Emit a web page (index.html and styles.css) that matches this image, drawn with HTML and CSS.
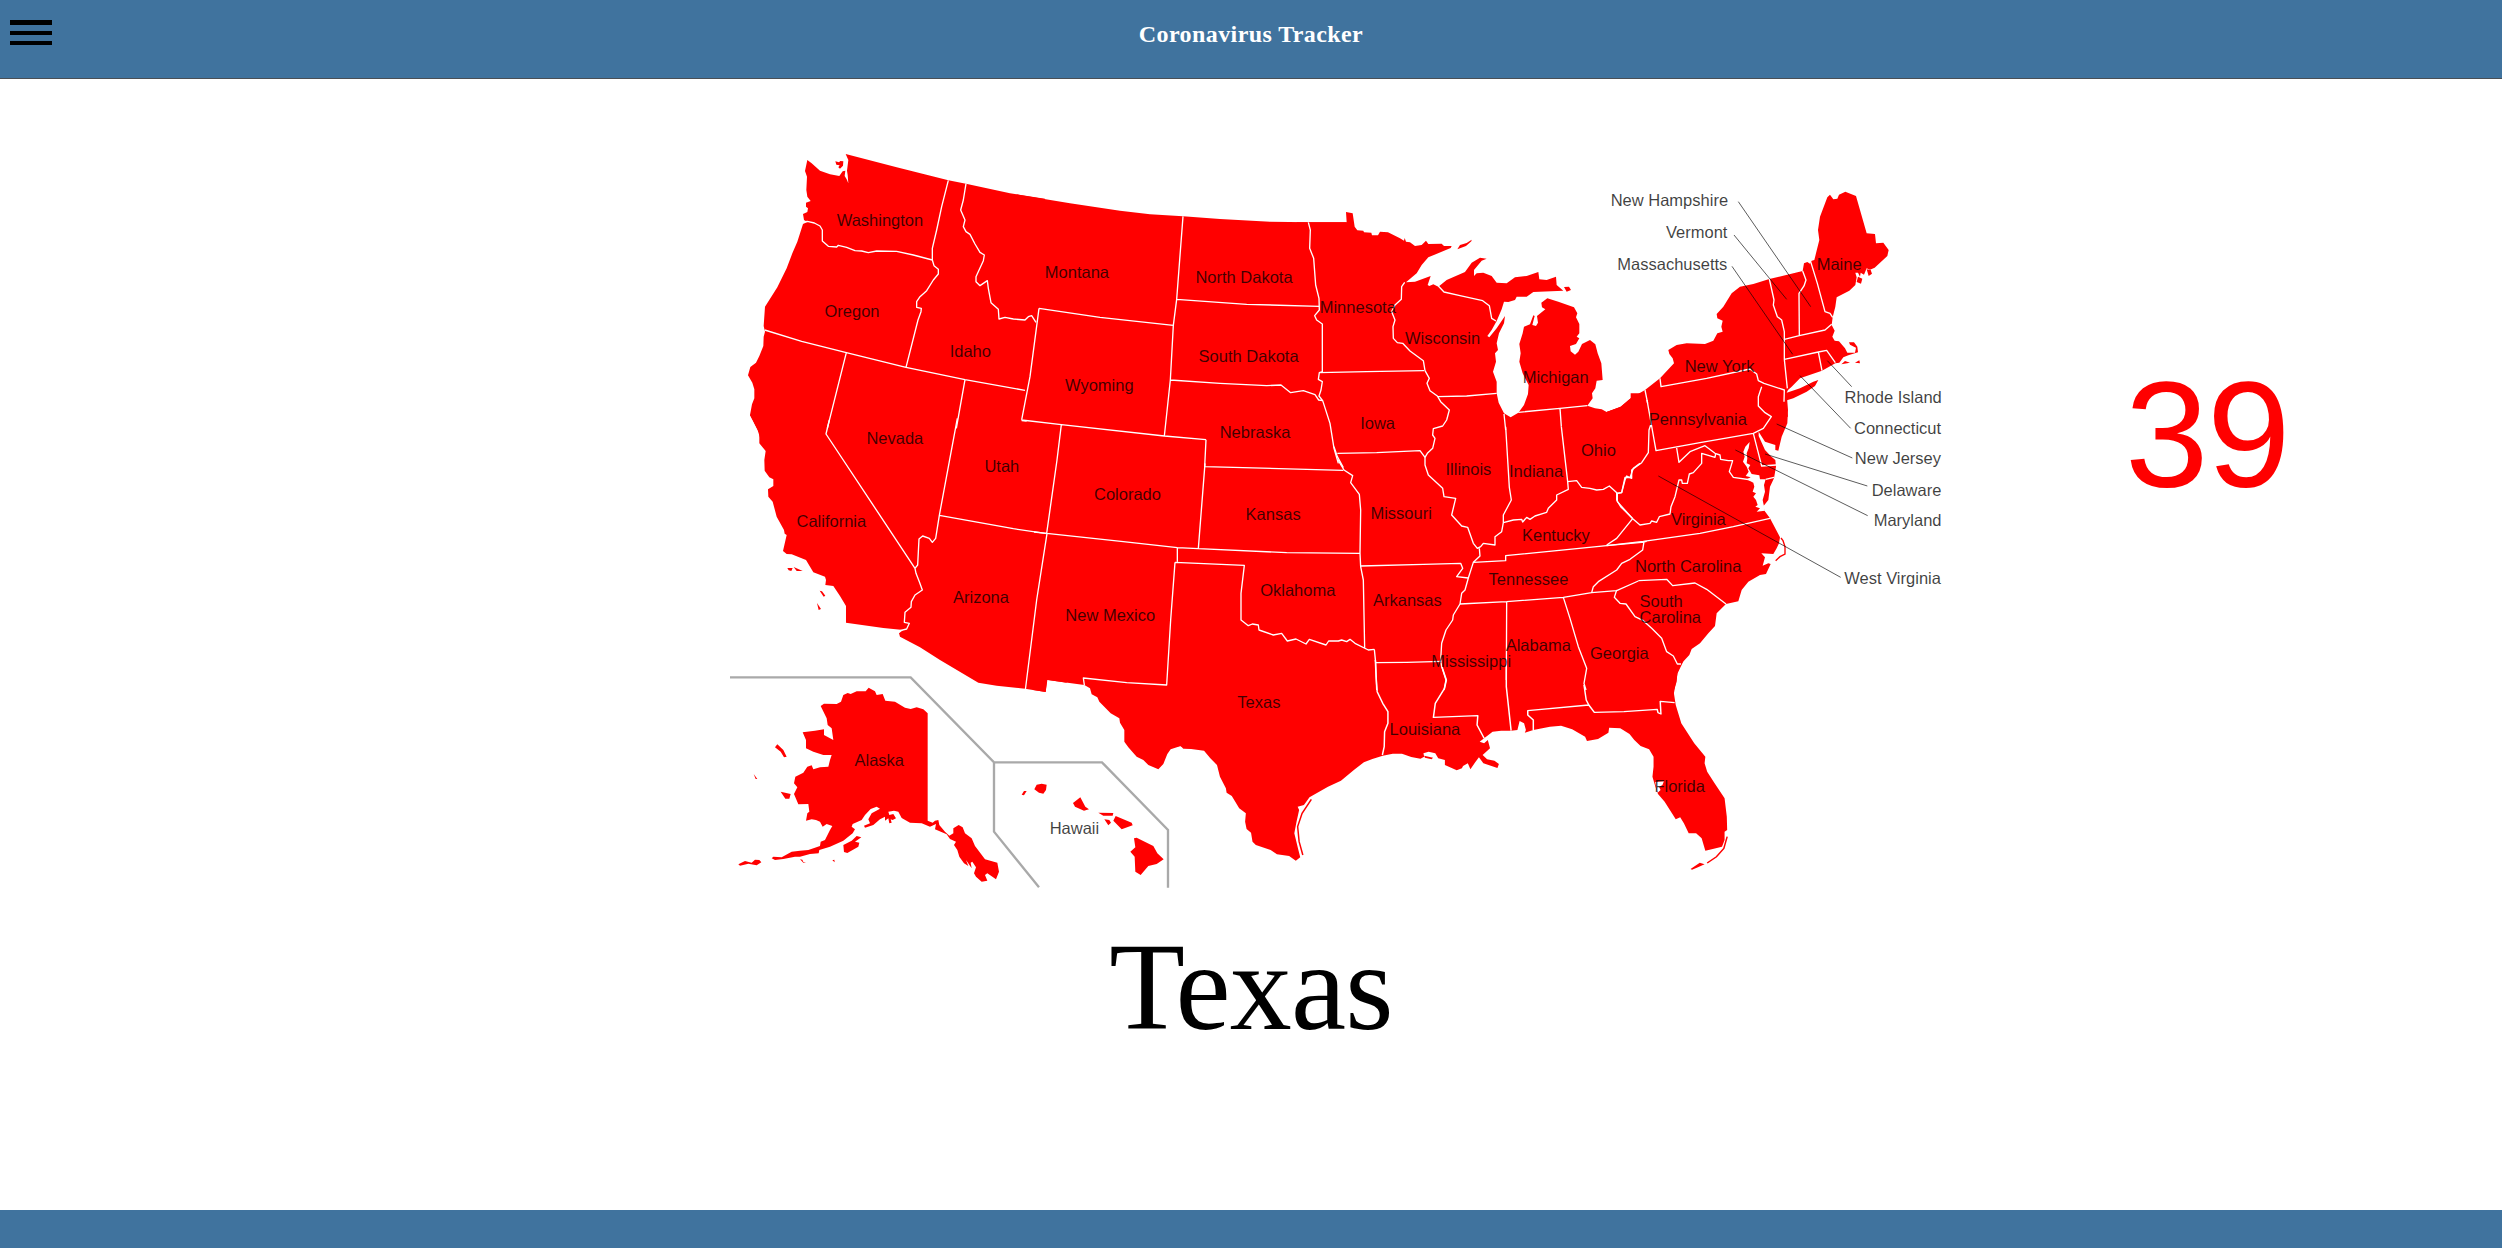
FILE: index.html
```html
<!DOCTYPE html>
<html lang="en">
<head>
<meta charset="utf-8">
<title>Coronavirus Tracker</title>
<link rel="stylesheet" href="styles.css">
</head>
<body>
<header class="header">
  <button class="menu" aria-label="Menu">
    <span class="bar bar-top"></span>
    <span class="bar"></span>
    <span class="bar"></span>
  </button>
  <h1 class="title">Coronavirus Tracker</h1>
  <span class="header-end"></span>
</header>
<main class="main">
  <section class="tracker">
    <svg class="map" viewBox="720 140 1240 760" role="img" aria-label="Map of the United States">
      <g class="land">
        <!-- Northwest -->
        <g transform="translate(720 140) scale(.33333)">
          <path d="M122,900 113,870 90,825 96,793 103,775 103,748 97,728 84,706 91,681 108,668 118,648 130,618 131,590 135,575 131,558 135,500 172,442 200,385 217,340 232,305 249,252 262,246 252,240 249,222 262,216 264,205 258,200 258,188 272,183 262,170 259,150 261,110 255,93 262,60 275,70 300,92 330,103 358,108 368,94 376,92 374,108 380,118 385,130 383,105 381,92 385,60 377,42 530,82 685,121 738,131 870,160 960,174 975,176 975,900Z"/>
          <path d="M346,64 357,67 361,63 370,64 369,77 360,86 355,82 359,76 349,74Z"/>
        </g>
        <!-- Northern plains -->
        <g transform="translate(1020 190) scale(.33333)">
          <path d="M-10,13 0,15 150,40 300,62 390,73 489,79 600,87 750,95 865,97 980,97 980,900 -10,900Z"/>
        </g>
        <!-- Great Lakes -->
        <g transform="translate(1300 190) scale(.33333)">
          <path d="M-10,97 140,97 138,66 158,70 164,110 172,121 190,122 192,127 214,128 216,136 234,136 240,125 264,127 300,145 312,152 314,144 318,155 330,157 345,168 365,165 378,152 385,162 425,161 432,168 455,168 452,174 385,202 365,225 350,250 318,277 345,275 392,258 383,285 388,288 400,283 415,290 440,270 495,246 515,218 540,203 560,206 545,212 522,240 522,258 530,250 550,248 575,258 590,278 620,280 645,262 680,258 715,246 718,268 740,270 768,260 770,285 790,302 700,306 680,320 650,320 645,330 625,336 612,335 605,358 590,393 575,420 562,438 568,442 590,415 615,378 612,400 597,430 590,460 594,480 585,490 588,515 579,545 590,575 590,610 596,638 612,670 632,682 655,668 672,645 684,612 686,585 668,550 658,515 662,490 658,462 668,430 672,410 690,403 700,376 704,378 697,405 708,408 714,398 711,378 736,358 726,352 724,338 742,325 775,335 822,352 832,370 828,382 838,402 838,430 830,440 838,445 828,462 810,468 812,484 825,494 835,485 846,462 870,450 886,463 893,490 904,520 908,570 890,572 886,595 876,610 878,625 862,647 885,655 905,658 920,666 955,655 980,650 980,880 -10,900Z"/>
          <path d="M472,178 480,165 500,159 515,149 514,154 498,168ZM792,291 807,290 813,300 800,305Z"/>
        </g>
        <!-- Northeast -->
        <g transform="translate(1600 170) scale(.33333)">
          <path d="M-10,740 -10,718 0,722 18,727 62,710 92,685 135,660 180,625 222,580 218,565 208,552 205,540 230,525 260,520 315,522 340,512 352,490 368,485 364,470 368,452 352,445 350,432 370,410 395,370 420,350 460,342 508,327 608,303 612,280 622,276 630,281 635,272 643,270 648,250 658,210 654,180 660,140 682,82 690,74 700,88 712,86 717,74 736,65 768,78 800,190 825,192 828,220 850,218 866,240 862,258 824,293 810,299 800,295 792,314 782,308 780,320 774,308 766,308 770,322 766,345 748,362 710,382 706,410 698,442 695,465 704,482 697,500 704,512 717,514 735,535 742,548 765,548 768,533 750,524 747,517 762,517 772,530 774,547 745,556 730,562 718,578 706,580 666,602 600,625 575,650 564,660 560,668 600,655 640,635 655,630 645,648 620,665 580,685 556,692 554,702 542,708 558,706 564,740Z"/>
          <path d="M724,583 735,573 750,578ZM765,578 778,571 780,580ZM774,320 787,326 783,341 770,336ZM800,298 812,300 816,311 806,318Z"/>
        </g>
        <!-- Southwest -->
        <g transform="translate(720 420) scale(.33333)">
          <path d="M90,-15 98,0 118,40 118,70 137,93 133,120 134,152 148,172 160,178 160,198 144,208 145,230 158,245 170,290 192,330 194,341 200,345 189,393 200,402 215,403 258,420 280,457 315,470 318,480 316,495 340,498 360,528 378,558 378,608 490,624 550,630 537,640 540,650 600,682 660,720 775,788 830,797 915,806 977,816 981,779 1020,785 1040,788 1040,-20Z"/>
          <path d="M202,444 218,444 214,453 206,451ZM221,441 248,453 230,453ZM299,512 306,514 316,527 311,530ZM291,549 303,567 296,570Z"/>
        </g>
        <!-- Southern plains -->
        <g transform="translate(1040 460) scale(.33333)">
          <path d="M-20,-20 1040,-20 1040,868 430,866 422,858 392,868 382,882 370,912 355,928 325,915 310,900 290,890 265,862 253,845 253,810 240,788 238,775 212,760 178,725 172,712 155,703 150,685 133,675 22,660 17,696 -20,690Z"/>
        </g>
        <!-- Mississippi and Ohio valleys -->
        <g transform="translate(1340 400) scale(.33333)">
          <path d="M-10,85 980,85 980,900 -10,900Z"/>
        </g>
        <!-- Mid-Atlantic -->
        <g transform="translate(1600 400) scale(.33333)">
          <path d="M-10,28 0,32 18,37 62,20 92,-5 92,-20 560,-20 564,30 562,70 545,110 535,152 526,150 526,135 495,125 482,105 476,95 476,108 495,150 512,168 526,180 528,200 522,235 510,260 505,300 493,315 490,318 494,333 510,355 540,412 537,430 530,445 520,462 484,460 495,472 488,497 505,490 512,492 498,522 480,525 445,545 425,570 415,604 378,612 350,640 345,678 325,700 300,730 275,747 268,765 243,792 232,820 230,845 222,870 222,900 -10,900Z"/>
          <path class="water" d="M449,126 436,140 430,155 434,170 429,185 440,200 446,215 437,228 452,232 440,238 460,248 463,260 458,275 468,280 460,290 468,300 473,315 466,320 480,325 470,335 495,332 490,310 488,300 495,275 492,255 497,238 480,238 478,226 455,222 445,205 451,195 440,190 442,175 440,160 446,145Z"/>
          <path class="spit" d="M543,414 549,422 555,440 555,462 540,470 527,482"/>
        </g>
        <!-- Gulf coast -->
        <g transform="translate(1180 660) scale(.36996 .33333)">
          <path d="M-20,262 0,258 15,265 65,272 82,295 100,315 108,350 124,385 126,398 140,408 160,445 178,460 176,485 180,507 192,518 196,545 205,555 245,570 262,583 295,588 313,602 325,592 320,570 309,520 315,485 322,450 318,440 335,435 350,412 400,380 435,362 470,330 497,307 520,297 548,287 575,281 600,281 625,291 650,296 660,290 658,280 672,275 690,280 698,295 716,300 716,315 748,331 762,325 765,318 778,310 785,328 797,308 808,292 820,310 858,324 862,312 850,302 830,298 818,285 838,265 832,240 822,250 810,245 822,235 845,215 868,212 895,212 912,210 918,183 930,190 935,210 932,218 955,210 1000,200 1030,197 1060,208 1095,230 1100,243 1130,237 1158,218 1160,203 1190,205 1215,222 1228,240 1245,258 1268,268 1280,290 1280,320 1277,350 1285,380 1292,402 1310,425 1340,478 1352,472 1362,490 1375,520 1395,520 1410,535 1420,572 1440,567 1465,560 1472,540 1472,515 1479,510 1478,470 1472,415 1445,370 1425,335 1418,310 1420,290 1390,250 1355,190 1340,135 1335,100 1345,40 1360,5 1362,-10 -20,-10Z"/>
          <path class="spit" d="M355,418 330,460 318,500 322,545 332,585M1479,530 1470,565 1450,590 1425,609"/>
          <path d="M1380,627 1392,618 1405,608 1418,613 1400,622 1384,629ZM660,287 684,293 680,298 662,293Z"/>
          <path class="water" d="M1284,366 1308,364 1304,375 1295,381 1299,390 1291,398Z"/>
        </g>
        <!-- Alaska and Hawaii -->
        <g transform="translate(720 660) scale(.33333)">
          <path d="M302,138 312,131 350,132 363,125 370,105 383,99 392,102 410,94 437,94 446,83 465,94 470,105 488,102 496,122 525,125 555,143 572,147 590,142 610,148 623,160 623,482 638,488 645,482 655,480 658,495 675,515 688,527 700,520 700,505 716,495 728,502 735,520 755,535 765,558 795,598 832,608 837,635 828,658 802,640 795,645 802,662 785,665 768,650 762,640 768,622 757,605 752,608 755,625 738,600 745,618 732,610 718,590 712,570 702,555 708,545 690,537 680,523 645,508 648,492 630,500 605,490 570,488 545,474 535,455 522,452 505,455 508,465 520,462 528,475 518,480 512,478 515,488 508,490 505,475 495,482 495,470 480,478 460,495 435,503 432,497 450,490 445,478 455,460 480,446 470,440 452,447 435,465 425,480 398,492 395,500 405,508 398,520 370,542 330,560 298,570 296,580 270,582 240,590 225,590 190,597 165,600 155,595 160,590 185,592 215,575 240,572 265,570 300,558 302,545 315,540 330,510 337,498 320,492 308,500 300,485 288,480 275,478 258,482 262,460 268,455 265,432 235,433 222,402 232,382 222,370 226,350 250,338 262,320 275,316 280,328 300,322 325,320 330,300 335,285 310,285 280,275 258,265 258,240 248,217 285,212 312,208 312,225 340,240 335,205 323,195 320,175Z"/>
          <path d="M165,262 172,253 190,270 200,290 192,292 182,275ZM101,342 112,357 107,357ZM182,395 212,402 208,416 196,416ZM370,555 395,542 410,528 424,532 405,545 418,548 415,560 382,579 372,576ZM55,613 75,603 95,608 105,599 118,600 124,607 110,616 85,611 60,617ZM337,601 343,599 344,607ZM240,598 247,599 250,606 258,606 250,608ZM905,404 912,393 920,393 912,406ZM943,388 950,374 965,371 980,374 978,390 970,401 957,398ZM1059,429 1081,412 1096,440 1107,448 1092,452 1065,440ZM1135,458 1180,459 1178,467 1150,467ZM1153,478 1168,480 1173,488 1165,496ZM1180,482 1187,468 1235,488 1238,496 1205,508ZM1242,535 1250,533 1300,558 1312,580 1331,598 1310,612 1285,618 1262,645 1246,635 1244,590 1231,575 1246,562Z"/>
        </g>
      </g>
      <g class="borders">
        <!-- Northwest -->
        <path transform="translate(720 140) scale(.33333)" d="M249,246 262,244 283,249 300,258 307,270 307,303 325,319 350,321 355,316 380,322 405,332 425,333 445,338 470,333 530,334 580,345 637,360M685,121 665,200 650,270 637,325 637,360 642,377 655,388 655,402 640,420 620,452 600,470 590,485 590,502 604,505 603,515 594,540 558,682M738,131 730,180 722,210 735,240 730,260 738,275 750,283 765,312 780,337 793,345 790,362 768,410 768,425 780,437 802,422 805,445 813,488 835,508 837,537 855,532 880,537 915,540 925,530 935,527 948,547M134,570 245,604 379,638 558,682 735,719 915,751M379,638 322,865M735,719 709,865"/>
        <!-- Northern plains -->
        <path transform="translate(1020 190) scale(.33333)" d="M57,355 30,560 5,690M57,355 240,382 460,406M5,690 124,704 433,738 558,749M489,79 470,328 460,406 451,570 433,738M470,328 680,343 898,349M451,570 600,580 740,587 783,585 812,608 850,602 885,614 896,630 908,632M865,97 871,120 869,175 881,205 887,285 897,325 898,360 884,377 890,390 907,402 907,545 898,548 895,568 907,575 903,600 897,618 908,632 930,700 942,775 955,820M558,749 554,830 970,841M124,704 111,810"/>
        <!-- Great Lakes -->
        <path transform="translate(1300 190) scale(.33333)" d="M58,548 200,545 372,542M112,790 230,788 360,782 375,802M314,277 305,290 304,328 285,345 275,365 285,390 279,410 280,445 292,458 308,460 330,483 370,512 375,542 388,565 381,580 390,602 412,618 422,635 448,660 440,690 428,708 400,716 398,735 405,745 398,775 382,790 375,802M412,620 500,618 590,610M415,288 432,306 480,317 548,332 568,347 575,385 588,393M612,672 617,720M655,667 780,655 862,647M780,655 784,710M102,770 112,800 130,833"/>
        <!-- Northeast -->
        <path transform="translate(1600 170) scale(.33333)" d="M508,327 522,390 520,405 532,440 545,450 553,485 553,568 562,655M608,303 618,330 612,348 597,370 598,495M632,275 652,340 675,425 690,430 698,442M553,508 598,497 675,480 695,463M553,568 655,546 680,541 706,578M655,546 666,602M135,660 143,700M180,625 183,650 320,625 450,597 470,612 475,632 492,640 553,660 552,695"/>
        <!-- Southwest -->
        <path transform="translate(720 420) scale(.33333)" d="M328,0 318,42 585,445M712,-5 658,286 647,355 637,367 628,355 608,348 597,357 593,435 585,445 588,460 598,485 607,510 585,525 574,545 573,562 555,577 553,607 568,610 560,627 540,632M658,286 880,326 981,341M981,341 950,540 916,810M905,2 920,3"/>
        <!-- Southern plains -->
        <path transform="translate(1040 460) scale(.33333)" d="M51,0 20,220M-18,216 20,220 250,245 412,263 475,266 740,278 958,280M495,10 475,266M894,0 912,30 938,47 932,68 958,103 962,150 960,280 962,320 970,360 974,565M412,263 412,305M405,307 613,316 603,400 603,480 625,497 637,492 655,495 657,510 700,525 725,520 742,543 768,537 798,552 808,538 858,555 866,543 895,543 905,540 920,545 930,538 945,550 985,570 1003,568M405,307 392,480 380,675 260,668 130,654 133,675"/>
        <!-- Mississippi and Ohio valleys -->
        <path transform="translate(1340 400) scale(.33333)" d="M255,170 255,195 265,225 308,265 312,290 347,295 335,345 365,378 383,382 400,430 412,445 422,440 430,430 465,435 465,410 485,395 490,368M418,445 420,468 400,487 385,534 375,570 365,580 360,612 340,645 338,660 318,690 305,730 302,780 305,800 318,840 312,870M497,80 508,262 514,300 490,345 490,368 520,360 545,358 548,366 560,352 570,358 585,348 610,340 620,337 625,325 650,300 650,285 685,268 683,245 664,80M683,245 710,242 725,262 750,265 770,270 790,268 808,258 832,280 845,278 855,232 870,233 880,205 900,190M832,280 832,305 878,356M878,356 830,415 800,435M400,487 497,482 497,467 650,452 800,437 905,427 920,424M360,612 500,605 670,592 755,578 830,572 895,543M755,578 760,560 775,545 830,510 845,490 870,478 908,450 912,425M62,498 250,493 362,490 368,505 350,530 385,534M103,748 107,788 200,787 305,784M107,788 110,870M500,605 499,840M670,592 690,655 715,740 740,805 732,850 738,870"/>
        <!-- Mid-Atlantic -->
        <path transform="translate(1600 400) scale(.33333)" d="M141,0 168,152 300,128 460,100 490,85 514,50 495,38 475,18 475,-10 485,-40M152,75 147,90 145,158 125,188 95,210 95,235 80,228 75,240 65,278 50,280 50,300 62,320 100,358 120,375 150,370 155,363 170,367 178,350 210,342 213,320 225,290 237,240 245,240 247,250 262,250 268,222 280,218 305,190 305,160 345,172 347,160M230,144 237,187 270,155 315,137 345,160 360,165 362,178 385,182 398,182 388,215 400,232 455,240M460,100 474,155 485,198 528,195M497,238 522,232M20,437 130,424 300,400 400,380 510,355M115,542 200,538 218,557 285,549 320,568 378,612M50,570 43,592 60,610 78,612 105,650 130,662 155,685 185,715 200,755 220,768 232,792 243,792"/>
        <!-- Gulf coast -->
        <path transform="translate(1180 660) scale(.36996 .33333)" d="M528,0 530,50 533,95 548,130 562,155 562,190 553,215 552,260 547,285M708,20 720,60 715,85 690,130 685,172 805,167 803,195 822,235M882,20 882,80 895,212M955,210 955,180 940,165 940,152 1105,135M1092,75 1098,120 1105,135 1120,157 1200,155 1290,148 1292,158 1300,162 1298,124 1337,128"/>
      </g>
      <path class="inset" transform="translate(720 660) scale(.33333)" d="M30,52H572L822,307H1146L1344,510V683M822,307V515L957,682"/>
      <path class="leaders" transform="translate(1600 170) scale(.33333)" d="M415,95 632,410M402,195 560,388M396,289 578,553M682,572 755,650M600,617 752,775M530,762 757,864M495,852 802,948M406,840 803,1037M175,918 722,1222"/>
      <g class="labels">
        <text x="836.7" y="226.3">Washington</text>
        <text x="824.5" y="317.3">Oregon</text>
        <text x="949.7" y="357">Idaho</text>
        <text x="1044.8" y="278.3">Montana</text>
        <text x="1195.4" y="283">North Dakota</text>
        <text x="1198.6" y="361.7">South Dakota</text>
        <text x="1065" y="391">Wyoming</text>
        <text x="1219.7" y="437.7">Nebraska</text>
        <text x="1319.7" y="312.7">Minnesota</text>
        <text x="1405" y="344.3">Wisconsin</text>
        <text x="1522.7" y="383.3">Michigan</text>
        <text x="1360.2" y="429.3">Iowa</text>
        <text x="1445.5" y="474.7">Illinois</text>
        <text x="1509" y="477">Indiana</text>
        <text x="1581" y="455.7">Ohio</text>
        <text x="1610.7" y="205.7">New Hampshire</text>
        <text x="1666" y="238.3">Vermont</text>
        <text x="1617.3" y="269.7">Massachusetts</text>
        <text x="1816.7" y="270.3">Maine</text>
        <text x="1684.7" y="372.3">New York</text>
        <text x="1648.7" y="425">Pennsylvania</text>
        <text x="1844.5" y="403.3">Rhode Island</text>
        <text x="1854" y="434.3">Connecticut</text>
        <text x="1854.8" y="463.7">New Jersey</text>
        <text x="1871.7" y="496.3">Delaware</text>
        <text x="1873.7" y="526">Maryland</text>
        <text x="1844.3" y="583.7">West Virginia</text>
        <text x="1671" y="525">Virginia</text>
        <text x="1635" y="572.3">North Carolina</text>
        <text x="1639.6" y="606.7">South</text>
        <text x="1639.6" y="623.3">Carolina</text>
        <text x="1590" y="659.3">Georgia</text>
        <text x="1505.7" y="651">Alabama</text>
        <text x="1431.3" y="666.7">Mississippi</text>
        <text x="1488.6" y="585.3">Tennessee</text>
        <text x="1522" y="541.3">Kentucky</text>
        <text x="1370.4" y="519">Missouri</text>
        <text x="1373" y="606.3">Arkansas</text>
        <text x="866.4" y="444.3">Nevada</text>
        <text x="984.4" y="472.3">Utah</text>
        <text x="796.5" y="527">California</text>
        <text x="953" y="603.3">Arizona</text>
        <text x="1094" y="500.3">Colorado</text>
        <text x="1245.6" y="520">Kansas</text>
        <text x="1260.2" y="596.3">Oklahoma</text>
        <text x="1065.3" y="620.7">New Mexico</text>
        <text x="1237.3" y="707.7">Texas</text>
        <text x="1389.6" y="735.3">Louisiana</text>
        <text x="1654.4" y="792">Florida</text>
        <text x="854.5" y="766">Alaska</text>
        <text x="1049.7" y="834">Hawaii</text>
      </g>
    </svg>
    <p class="count">39</p>
  </section>
  <p class="state">Texas</p>
</main>
<footer class="footer"></footer>
</body>
</html>
```

FILE: styles.css
```css
* { box-sizing: border-box; }

body {
  margin: 0;
  min-height: 100vh;
  display: flex;
  flex-direction: column;
  background: #fff;
  font-family: "Liberation Serif", "Times New Roman", serif;
}

.header {
  height: 79px;
  display: grid;
  grid-template-columns: 52px 1fr 52px;
  background: #40739e;
  border-bottom: 1px solid #4a4f55;
}

.menu {
  margin: 20px 0 0 10px;
  padding: 0;
  width: 42px;
  height: 25px;
  display: flex;
  flex-direction: column;
  gap: 6px;
  border: 0;
  background: none;
}

.bar {
  width: 42px;
  height: 4px;
  background: #000;
}

.bar-top { height: 5px; }

.title {
  margin: 20px 0 0;
  font-size: 24px;
  line-height: 28px;
  letter-spacing: .4px;
  text-align: center;
  color: #fff;
}

.main { flex: 1; }

.tracker {
  display: grid;
  grid-template-columns: 1240px 1fr;
  padding: 61px 0 0 720px;
}

.map {
  display: block;
  width: 1240px;
  height: 760px;
}

.land { fill: #f00; }
.water { fill: #fff; }
.borders { fill: none; stroke: #fff; stroke-width: 4; stroke-linejoin: round; }
.spit { fill: none; stroke: #f00; stroke-width: 4; }
.inset { fill: none; stroke: #a9a9a9; stroke-width: 7; }
.leaders { fill: none; stroke: #000; stroke-width: 2.6; opacity: .75; }

.labels {
  font-family: "Liberation Sans", Arial, sans-serif;
  font-size: 16.5px;
  fill: #000;
  fill-opacity: .75;
}

.count {
  margin: 208px 0 0 165px;
  font-family: "Liberation Sans", Arial, sans-serif;
  font-size: 150px;
  line-height: 174px;
  letter-spacing: -1.5px;
  color: #f00;
}

.state {
  margin: 19px 0 0;
  font-size: 124px;
  line-height: 138px;
  letter-spacing: -.8px;
  text-align: center;
  color: #000;
}

.footer {
  height: 38px;
  background: #40739e;
}
```
